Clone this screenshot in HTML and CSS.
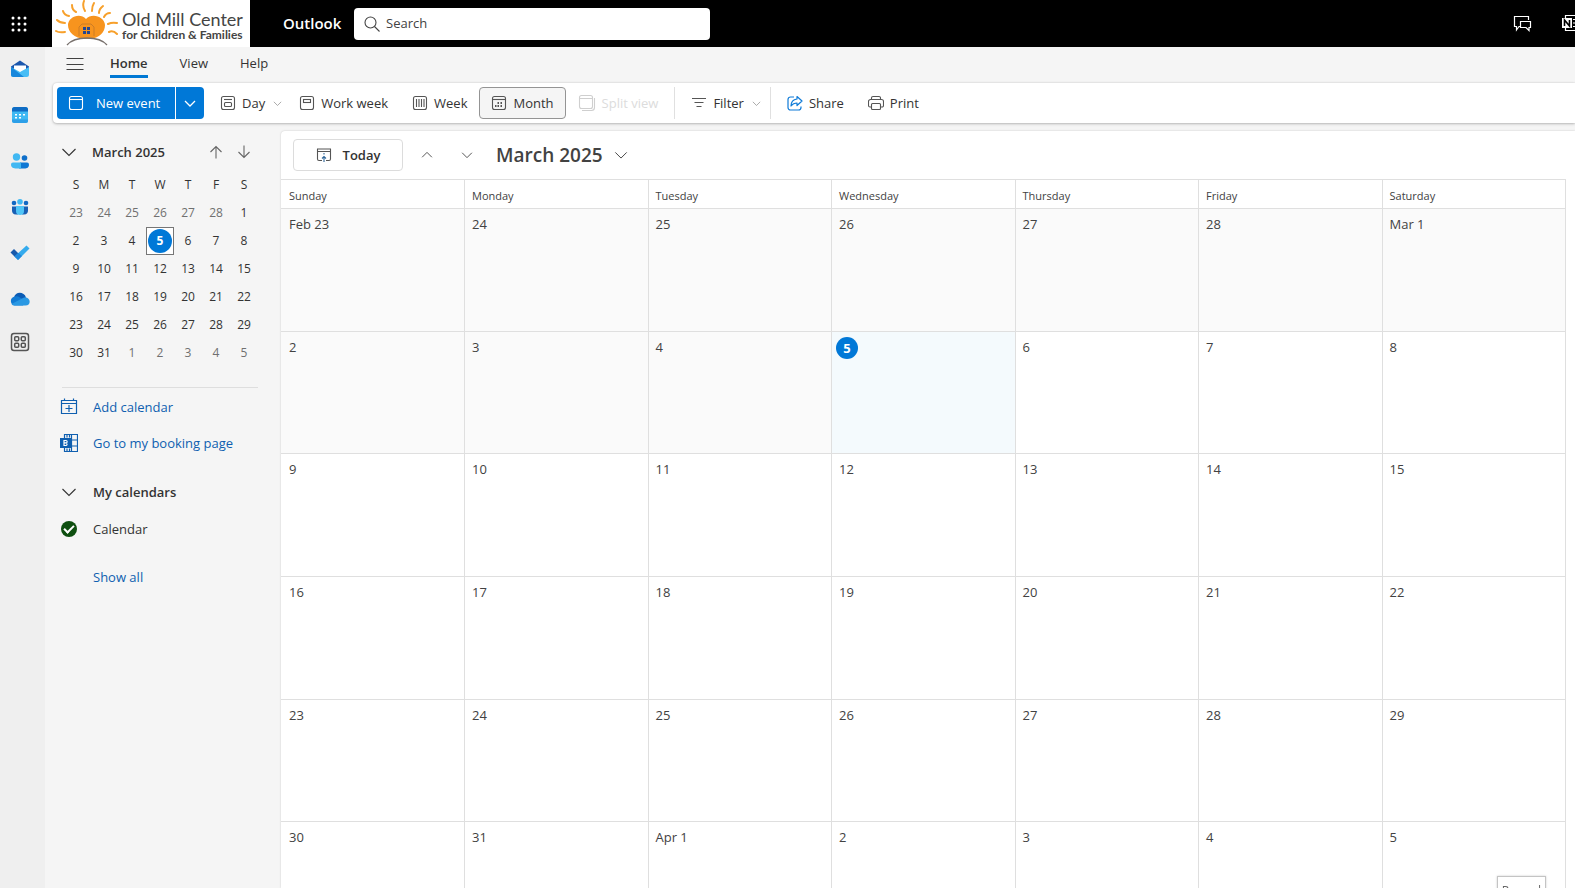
FILE: index.html
```html
<!DOCTYPE html>
<html lang="en">
<head>
    <meta charset="UTF-8">
    <title>Calendar - Outlook</title>
    <link rel="stylesheet" href="styles.css">
</head>
<body>
    <!-- shared icons -->
    <svg class="sprite" aria-hidden="true">
        <symbol id="chev-down" viewBox="0 0 16 16"><path d="M1.5 5 8 11.5 14.5 5" fill="none" stroke="currentColor" stroke-width="1.1"/></symbol>
        <symbol id="chev-up" viewBox="0 0 16 16"><path d="M1.5 11 8 4.5 14.5 11" fill="none" stroke="currentColor" stroke-width="1.1"/></symbol>
    </svg>

    <header class="topbar">
        <button class="launcher" aria-label="App launcher">
            <svg width="16" height="16" viewBox="0 0 16 16" fill="#fff"><circle cx="2" cy="2" r="1.5"/><circle cx="8" cy="2" r="1.5"/><circle cx="14" cy="2" r="1.5"/><circle cx="2" cy="8" r="1.5"/><circle cx="8" cy="8" r="1.5"/><circle cx="14" cy="8" r="1.5"/><circle cx="2" cy="14" r="1.5"/><circle cx="8" cy="14" r="1.5"/><circle cx="14" cy="14" r="1.5"/></svg>
        </button>
        <a class="brand" href="#">
            <svg width="64" height="47" viewBox="0 0 64 47" fill="none">
                <path d="M33 39C22 38 16 32 16 25c0-8 12-13 18-6 6-7 19-2 19 6 0 7-5 13-16 14z" fill="#f7941e"/>
                <g stroke="#f7a02b" stroke-width="2" stroke-linecap="round">
                    <path d="M4 31q3 2 9 1M5 20q3 3 8 3M11 11q1 4 6 5M20 5q0 5 4 7M32 1q-2 5 1 10M42 3q-2 3-2 8M51 6q-4 3-4 7M58 13q-4 0-6 4M65 23q-5-1-9 1M57 32q4-2 8 2"/>
                </g>
                <path d="M15 45q6-7 20-7t20 7" stroke="#77706c" stroke-width="1.3"/>
                <path d="M27 36v-9l3-3h9l3 3v9" stroke="#cc7c25"/>
                <path d="M31 27h3v3h-3zM35 27h3v3h-3zM31 31h3v3h-3zM35 31h3v3h-3z" fill="#24478f"/>
            </svg>
            <span class="brand-text">
                <span class="brand-name">Old Mill Center</span>
                <span class="brand-sub">for Children &amp; Families</span>
            </span>
        </a>
        <span class="app-name">Outlook</span>
        <label class="search">
            <svg width="16" height="16" viewBox="0 0 16 16" fill="none" stroke="#444" stroke-width="1.1"><circle cx="6.5" cy="6.5" r="5.5"/><path d="m10.500 10.500 5 5"/></svg>
            <input type="text" placeholder="Search" aria-label="Search">
        </label>
        <div class="top-actions">
            <button aria-label="Chat">
                <svg width="20" height="20" viewBox="0 0 20 20" fill="none" stroke="#fff" stroke-width="1.2"><path d="M7 12.500H6L3.500 16v-3.500h-2v-10h14V6"/><path d="M7.500 7.500h10v6h-1.500v3L13 13.500H7.500z"/></svg>
            </button>
            <button aria-label="OneNote feed">
                <svg width="20" height="20" viewBox="0 0 20 20"><path d="M3.500 4V1.500h15v15h-15V14M11 5.500h7M11 9h7M11 12.500h7" fill="none" stroke="#fff" stroke-width="1.200"/><path d="M0 4h10v10H0z" fill="#fff"/><path d="M2.500 12V6l5 6V6" fill="none" stroke="#000" stroke-width="1.600"/></svg>
            </button>
        </div>
    </header>

    <div class="shell">
        <nav class="rail" aria-label="Apps">
            <a href="#" aria-label="Mail"><svg width="20" height="20" viewBox="0 0 20 20"><path d="M1 7.500 10 1.500l9 6V11H1z" fill="#1b57ad"/><path d="M4 6.500h12v7H4z" fill="#fff"/><path d="M1 8l9 5 9-5v7.500a2.500 2.500 0 0 1-2.500 2.500h-13A2.500 2.500 0 0 1 1 15.500z" fill="#47bdf5"/><path d="M1 8l13 10H3.500A2.500 2.500 0 0 1 1 15.500z" fill="#1787dc"/></svg></a>
            <a href="#" aria-label="Calendar"><svg width="20" height="20" viewBox="0 0 20 20"><rect x="2" y="2" width="16" height="16" rx="2.500" fill="#3fb9f3"/><path d="M2 6.500v-2A2.500 2.500 0 0 1 4.500 2h11A2.500 2.500 0 0 1 18 4.500v2z" fill="#0f6cc4"/><path d="M2 14.500h16v1a2.500 2.500 0 0 1-2.500 2.500h-11A2.500 2.500 0 0 1 2 15.500z" fill="#2c9fe8"/><path d="M5 9h2v1.500H5zM9 9h2v1.500H9zM13 9h2v1.500h-2zM5 12h2v1.500H5zM9 12h2v1.500H9z" fill="#fff"/></svg></a>
            <a href="#" aria-label="People"><svg width="20" height="20" viewBox="0 0 20 20"><circle cx="6.500" cy="6" r="3.700" fill="#41b8f2"/><circle cx="14.500" cy="7" r="2.800" fill="#0f6fca"/><path d="M10 11.500h7a2 2 0 0 1 2 2c0 3-2 4-4.500 4H9z" fill="#0f78d4"/><path d="M3 11.500h8v6H6.500C3.500 17.500 1 16.500 1 13.500a2 2 0 0 1 2-2z" fill="#41b8f2"/></svg></a>
            <a href="#" aria-label="Groups"><svg width="20" height="20" viewBox="0 0 20 20"><circle cx="4" cy="6" r="2.300" fill="#1268c3"/><circle cx="16" cy="6" r="2.300" fill="#1268c3"/><path d="M2 9.500h6v8H6c-3 0-4-2-4-4zM12 9.500h6v4c0 2-1 4-4 4h-2z" fill="#185fb4"/><circle cx="10" cy="4.800" r="2.800" fill="#41b8f2"/><path d="M6 10a1 1 0 0 1 1-1h6a1 1 0 0 1 1 1v4a4 4 0 0 1-8 0z" fill="#50c5f7"/></svg></a>
            <a href="#" aria-label="To Do"><svg width="20" height="20" viewBox="0 0 20 20"><path d="m.5 9.500 3.500-3.500 5 5-3.500 3.500z" fill="#195aab"/><path d="m4.500 13.500 12-11 3 3L8 17z" fill="#35abed"/><path d="m4.500 13.500 4-3.500 3.500 3L8 17z" fill="#2088dc"/></svg></a>
            <a href="#" aria-label="OneDrive"><svg width="20" height="20" viewBox="0 0 20 20"><path d="M4 8.500C5 2.500 14 2 16 8.500l-4 4z" fill="#0b5cb5"/><path d="M4.500 16.500A4.500 4.500 0 0 1 4 7.800Q7 6.500 10 8.500l6 3.500-3 4.500z" fill="#127bd4"/><path d="M4.500 16.500Q2.500 16.500 1.500 15L13 9q2-1.200 4-.3c4 1.800 3.500 7.800-1.500 7.800z" fill="#2a98e3"/></svg></a>
            <a href="#" class="rail-more" aria-label="More apps"><svg width="20" height="20" viewBox="0 0 20 20" fill="none" stroke="#555" stroke-width="1.500"><rect x="1.500" y="1.500" width="17" height="17" rx="2.500"/><rect x="4.700" y="4.700" width="4" height="4" rx="1"/><rect x="11.300" y="4.700" width="4" height="4" rx="1"/><rect x="4.700" y="11.300" width="4" height="4" rx="1"/><rect x="11.300" y="11.300" width="4" height="4" rx="1"/></svg></a>
        </nav>

        <div class="content">
            <div class="tabs">
                <button class="menu-btn" aria-label="Menu"><svg width="18" height="14" viewBox="0 0 18 14" stroke="#424242" stroke-width="1.200"><path d="M.5 1.500h17M.5 7.500h17M.5 12.500h17"/></svg></button>
                <button class="tab active">Home</button>
                <button class="tab">View</button>
                <button class="tab">Help</button>
            </div>

            <div class="toolbar">
                <div class="new-event">
                    <button class="new-main">
                        <svg width="16" height="16" viewBox="0 0 16 16" fill="none" stroke="#fff" stroke-width="1.100"><rect x="1.500" y="1.500" width="13" height="13" rx="2"/><path d="M1.500 4.500h13"/></svg>
                        New event
                    </button>
                    <button class="new-more" aria-label="More new options"><svg width="12" height="12" viewBox="0 0 12 12"><path d="M1 4l5 5 5-5" fill="none" stroke="#fff" stroke-width="1.300"/></svg></button>
                </div>
                <button class="tool day">
                    <svg class="line" width="16" height="16" viewBox="0 0 16 16"><rect x="1.500" y="1.500" width="13" height="13" rx="2"/><path d="M4 4.500h8"/><rect x="4.500" y="7.500" width="7" height="4" rx="1"/></svg>
                    Day
                    <svg class="caret" width="9" height="9"><use href="#chev-down"/></svg>
                </button>
                <button class="tool work">
                    <svg class="line" width="16" height="16" viewBox="0 0 16 16"><rect x="1.500" y="1.500" width="13" height="13" rx="2"/><rect x="4.500" y="4.500" width="7" height="3"/></svg>
                    Work week
                </button>
                <button class="tool week">
                    <svg class="line" width="16" height="16" viewBox="0 0 16 16"><rect x="1.500" y="1.500" width="13" height="13" rx="2"/><path d="M4.500 4v8M7 4v8M9.500 4v8M12 4v8"/></svg>
                    Week
                </button>
                <button class="tool month selected">
                    <svg class="line" width="16" height="16" viewBox="0 0 16 16"><rect x="1.500" y="1.500" width="13" height="13" rx="2"/><path d="M1.500 4.500h13"/><path d="M6.500 8h1.500M9.500 8h1.500M4 11h1.500M6.500 11h1.500M9.500 11h1.500" stroke-width="1.800"/></svg>
                    Month
                </button>
                <button class="tool split" disabled>
                    <svg class="line" width="18" height="18" viewBox="0 0 18 18"><rect x="1.500" y="1.500" width="13" height="13" rx="2"/><path d="M1.500 4.500h13M4 16.500h9.500a3 3 0 0 0 3-3V4"/></svg>
                    Split view
                </button>
                <span class="divider"></span>
                <button class="tool filter">
                    <svg class="line" width="16" height="16" viewBox="0 0 16 16"><path d="M1 3.500h14M3.500 7.500h9M5.500 11.500h5"/></svg>
                    Filter
                    <svg class="caret" width="9" height="9"><use href="#chev-down"/></svg>
                </button>
                <span class="divider"></span>
                <button class="tool share">
                    <svg width="16" height="16" viewBox="0 0 16 16" fill="none" stroke="#0f7bd8" stroke-width="1.200"><path d="M7 2H3.500A2.500 2.500 0 0 0 1 4.500v8A2.500 2.500 0 0 0 3.500 15h8a2.500 2.500 0 0 0 2.500-2.500V11.500"/><path d="M10 1.500 15 6l-5 4.500V8C7.500 8 5.500 9 4 11c0-4 2.500-6.500 6-7z" stroke-linejoin="round"/></svg>
                    Share
                </button>
                <button class="tool print">
                    <svg class="line" width="16" height="16" viewBox="0 0 16 16"><path d="M3.500 12H2a1.500 1.500 0 0 1-1.500-1.500V6.500a2 2 0 0 1 2-2h11a2 2 0 0 1 2 2v4A1.500 1.500 0 0 1 14 12h-1.500M3.500 4.500V3A1.500 1.500 0 0 1 5 1.500h6A1.500 1.500 0 0 1 12.500 3v1.500"/><rect x="3.500" y="8.500" width="9" height="6" rx="1"/></svg>
                    Print
                </button>
            </div>

            <div class="workspace">
                <aside class="sidebar">
                    <div class="mini-head">
                        <button aria-label="Collapse"><svg width="16" height="16"><use href="#chev-down"/></svg></button>
                        <button class="mini-title">March 2025</button>
                        <button class="arrow" aria-label="Previous month"><svg width="14" height="14" viewBox="0 0 14 14"><path d="M7 13.500V2M1.500 7 7 1.500 12.500 7" fill="none" stroke="#666" stroke-width="1.100"/></svg></button>
                        <button class="arrow" aria-label="Next month"><svg width="14" height="14" viewBox="0 0 14 14"><path d="M7 .5V12M1.500 7 7 12.500 12.500 7" fill="none" stroke="#666" stroke-width="1.100"/></svg></button>
                    </div>
                    <table class="mini">
                        <thead>
                            <tr><th>S</th><th>M</th><th>T</th><th>W</th><th>T</th><th>F</th><th>S</th></tr>
                        </thead>
                        <tbody>
                            <tr><td class="dim">23</td><td class="dim">24</td><td class="dim">25</td><td class="dim">26</td><td class="dim">27</td><td class="dim">28</td><td>1</td></tr>
                            <tr><td>2</td><td>3</td><td>4</td><td class="today"><span>5</span></td><td>6</td><td>7</td><td>8</td></tr>
                            <tr><td>9</td><td>10</td><td>11</td><td>12</td><td>13</td><td>14</td><td>15</td></tr>
                            <tr><td>16</td><td>17</td><td>18</td><td>19</td><td>20</td><td>21</td><td>22</td></tr>
                            <tr><td>23</td><td>24</td><td>25</td><td>26</td><td>27</td><td>28</td><td>29</td></tr>
                            <tr><td>30</td><td>31</td><td class="dim">1</td><td class="dim">2</td><td class="dim">3</td><td class="dim">4</td><td class="dim">5</td></tr>
                        </tbody>
                    </table>
                    <div class="side-links">
                        <a href="#">
                            <svg width="18" height="18" viewBox="0 0 18 18" fill="none" stroke="#0f5fb0" stroke-width="1.200"><path d="M1.500 2.500h15v13h-15zM1.500 5.500h15M4.500 .5v2M13.500 .5v2M9 7v7M5.500 10.500h7"/></svg>
                            Add calendar
                        </a>
                        <a href="#">
                            <svg width="18" height="18" viewBox="0 0 18 18"><path d="M4.500 .5h13v17h-13zM11.500 .5v17M11.500 6h6M11.500 12h6M7 .5v3M9.500 .5v3M7 14.500v3M9.500 14.500v3" fill="none" stroke="#0f5fb0" stroke-width="1.200"/><path d="M0 4h11v10H0z" fill="#0f5fb0"/><path d="M4 6.500v5h2a1.400 1.400 0 0 0 0-2.700H4h2a1.100 1.100 0 0 0 0-2.300z" fill="none" stroke="#fff" stroke-width="1.200"/></svg>
                            Go to my booking page
                        </a>
                    </div>
                    <button class="side-row group">
                        <svg width="16" height="16"><use href="#chev-down"/></svg>
                        My calendars
                    </button>
                    <label class="side-row">
                        <input type="checkbox" checked>
                        Calendar
                    </label>
                    <a class="show-all" href="#">Show all</a>
                </aside>

                <main class="calendar">
                    <div class="cal-head">
                        <button class="today-btn">
                            <svg width="16" height="16" viewBox="0 0 16 16" fill="none" stroke="#555" stroke-width="1.100"><path d="M6 13.500H3A1.500 1.500 0 0 1 1.500 12V2h13v10a1.500 1.500 0 0 1-1.500 1.500h-3M1.500 4.500h13"/><path d="M8 6v1.500M8 15V9.500M6 11.500l2-2 2 2" stroke="#2f6699"/></svg>
                            Today
                        </button>
                        <button class="step" aria-label="Previous"><svg width="12" height="12"><use href="#chev-up"/></svg></button>
                        <button class="step" aria-label="Next"><svg width="12" height="12"><use href="#chev-down"/></svg></button>
                        <button class="cal-title">March 2025 <svg width="14" height="14"><use href="#chev-down"/></svg></button>
                    </div>
                    <table class="month-grid">
                        <thead>
                            <tr><th>Sunday</th><th>Monday</th><th>Tuesday</th><th>Wednesday</th><th>Thursday</th><th>Friday</th><th>Saturday</th></tr>
                        </thead>
                        <tbody>
                            <tr><td class="past">Feb 23</td><td class="past">24</td><td class="past">25</td><td class="past">26</td><td class="past">27</td><td class="past">28</td><td class="past">Mar 1</td></tr>
                            <tr><td class="past">2</td><td class="past">3</td><td class="past">4</td><td class="now"><span>5</span></td><td>6</td><td>7</td><td>8</td></tr>
                            <tr><td>9</td><td>10</td><td>11</td><td>12</td><td>13</td><td>14</td><td>15</td></tr>
                            <tr><td>16</td><td>17</td><td>18</td><td>19</td><td>20</td><td>21</td><td>22</td></tr>
                            <tr><td>23</td><td>24</td><td>25</td><td>26</td><td>27</td><td>28</td><td>29</td></tr>
                            <tr><td>30</td><td>31</td><td>Apr 1</td><td>2</td><td>3</td><td>4</td><td>5</td></tr>
                        </tbody>
                    </table>
                </main>
            </div>
        </div>
    </div>
    <div class="tooltip" role="tooltip">Record</div>
</body>
</html>
```
FILE: styles.css
```css
* {
    box-sizing: border-box;
}
body {
    margin: 0;
    height: 100vh;
    overflow: hidden;
    display: flex;
    flex-direction: column;
    background: #f5f5f5;
    color: #333;
    font-family: "Open Sans", "Noto Sans", sans-serif;
    font-size: 13px;
    line-height: 20px;
}
button {
    font: inherit;
    color: inherit;
    background: none;
    border: none;
    padding: 0;
    cursor: pointer;
    white-space: nowrap;
    display: flex;
    align-items: center;
}
a {
    color: #0f5fb0;
    text-decoration: none;
}
svg {
    display: block;
    flex: none;
}
table {
    border-collapse: collapse;
    table-layout: fixed;
}
.sprite {
    position: absolute;
    width: 0;
    height: 0;
}

/* top bar */
.topbar {
    flex: none;
    height: 47px;
    background: #000;
    display: flex;
    align-items: center;
    overflow: hidden;
}
.launcher {
    width: 52px;
    padding-left: 11px;
}
.brand {
    width: 198px;
    height: 47px;
    background: #fff;
    display: flex;
    align-items: center;
    gap: 6px;
    color: #444;
    font-family: Lato, sans-serif;
    white-space: nowrap;
}
.brand svg {
    overflow: visible;
}
.brand-text {
    display: flex;
    flex-direction: column;
    padding-top: 4px;
}
.brand-name {
    font-size: 18px;
    line-height: 18px;
}
.brand-sub {
    font-size: 12px;
    line-height: 13px;
    font-weight: bold;
}
.app-name {
    margin-left: 33px;
    padding-bottom: 2px;
    width: 71px;
    color: #fff;
    font-size: 15px;
    font-weight: 600;
}
.search {
    width: 356px;
    height: 32px;
    padding: 0 10px;
    display: flex;
    align-items: center;
    gap: 6px;
    background: #fff;
    border-radius: 4px;
}
.search input {
    flex: 1;
    min-width: 0;
    border: none;
    outline: none;
    padding: 0 0 2px;
    font: inherit;
}
.search input::placeholder {
    color: #424242;
    opacity: 1;
}
.top-actions {
    display: flex;
    gap: 29px;
    margin-left: auto;
    margin-right: -7px;
}

.shell {
    flex: 1;
    min-height: 0;
    display: flex;
}
.rail {
    flex: none;
    width: 45px;
    padding: 12px 0 0 10px;
    background: #efefef;
    display: flex;
    flex-direction: column;
    gap: 26px;
}
.rail-more {
    margin-top: -3px;
}
.content {
    flex: 1;
    min-width: 0;
    display: flex;
    flex-direction: column;
}

/* ribbon */
.tabs {
    flex: none;
    height: 36px;
    padding-left: 21px;
    display: flex;
    gap: 32px;
}
.menu-btn {
    margin-right: -6px;
    padding-bottom: 2px;
}
.tab {
    height: 31px;
    padding-top: 4px;
    border-bottom: 3px solid transparent;
}
.tab.active {
    font-weight: 600;
    border-bottom-color: #0078d4;
}
.toolbar {
    flex: none;
    height: 40px;
    margin-left: 8px;
    padding: 0 4px;
    display: flex;
    align-items: center;
    background: #fff;
    border-radius: 4px 0 0 4px;
    box-shadow: 0 0 2px rgba(0,0,0,0.15), 0 1px 3px rgba(0,0,0,0.22);
}
.new-event {
    display: flex;
    gap: 1px;
    height: 32px;
    margin-right: 4px;
    color: #fff;
}
.new-event button {
    background: #0078d7;
}
.new-event .new-main {
    width: 118px;
    padding-left: 11px;
    gap: 12px;
    border-radius: 4px 0 0 4px;
}
.new-event .new-more {
    width: 28px;
    justify-content: center;
    border-radius: 0 4px 4px 0;
}
.tool {
    height: 32px;
    padding: 0 11px;
    gap: 6px;
    border: 1px solid transparent;
    border-radius: 4px;
}
.day,
.filter {
    padding-right: 4px;
}
.selected {
    background: #f5f5f5;
    border-color: #949494;
}
.tool:disabled {
    color: #dcdcdc;
}
.line {
    fill: none;
    stroke: #555;
    stroke-width: 1.1;
}
.tool:disabled .line {
    stroke: #cfcfcf;
}
.caret {
    margin-left: 2px;
    color: #777;
}
.divider {
    width: 1px;
    height: 32px;
    margin: 0 4px;
    background: #e0e0e0;
}

.workspace {
    flex: 1;
    min-height: 0;
    display: flex;
}

/* sidebar */
.sidebar {
    flex: none;
    width: 236px;
    padding: 16px 23px 0 16px;
}
.mini-head {
    height: 26px;
    display: flex;
    align-items: center;
}
.mini-title {
    flex: 1;
    margin-left: 15px;
    font-weight: 600;
}
.arrow {
    width: 28px;
    justify-content: center;
}
.mini {
    width: 196px;
    margin: 6px 0 0 1px;
    font-size: 12px;
}
.mini th,
.mini td {
    width: 28px;
    height: 28px;
    padding: 0;
    text-align: center;
    line-height: 24px;
}
.mini th {
    font-weight: normal;
}
.mini .dim {
    color: #707070;
}
.mini .today {
    outline: 1px solid #767676;
    outline-offset: -1px;
    background: #fff;
}
.today span,
.now span {
    display: block;
    border-radius: 50%;
    background: #0078d7;
    color: #fff;
    font-weight: bold;
    text-align: center;
}
.today span {
    width: 24px;
    margin: 0 auto;
}
.side-links {
    margin: 20px 0 0 1px;
    border-top: 1px solid #dedede;
}
.side-links a,
.side-row {
    width: 100%;
    height: 36px;
    display: flex;
    align-items: center;
    gap: 14px;
}
.side-links a {
    margin-left: -2px;
    gap: 15px;
}
.side-links a:first-child {
    margin-top: 1px;
}
.group {
    margin: 13px 0 1px;
    gap: 16px;
    font-weight: 600;
}
.side-row input {
    appearance: none;
    width: 16px;
    height: 16px;
    margin: 0 2px 0 0;
    border-radius: 50%;
    background: #0e4f10;
    display: flex;
    align-items: center;
    justify-content: center;
}
.side-row input::after {
    content: "";
    width: 8px;
    height: 4px;
    border-left: 2px solid #fff;
    border-bottom: 2px solid #fff;
    transform: translateY(-1px) rotate(-45deg);
}
.show-all {
    display: block;
    margin: 20px 0 0 32px;
}

/* month view */
.calendar {
    flex: 1;
    min-width: 0;
    margin-top: 8px;
    padding-right: 9px;
    background: #fff;
    border-radius: 4px 0 0 0;
    box-shadow: 0 0 2px rgba(0,0,0,0.2);
    overflow: hidden;
}
.cal-head {
    height: 48px;
    padding-left: 12px;
    display: flex;
    align-items: center;
}
.today-btn {
    width: 110px;
    height: 32px;
    margin-right: 4px;
    justify-content: center;
    gap: 11px;
    border: 1px solid #dcdcdc;
    border-radius: 4px;
    font-weight: 600;
}
.step {
    width: 40px;
    height: 32px;
    justify-content: center;
}
.cal-title {
    margin-left: 9px;
    gap: 11px;
    font-size: 19px;
    font-weight: 600;
    color: #424242;
}
.month-grid {
    width: 100%;
    height: 766px;
    color: #424242;
}
.month-grid th,
.month-grid td {
    border: 1px solid #dfdfdf;
    padding: 0 7px;
    text-align: left;
}
.month-grid th:first-child,
.month-grid td:first-child {
    border-left: none;
    padding-left: 8px;
}
.month-grid th {
    height: 29px;
    padding-top: 4px;
    font-size: 11px;
    font-weight: normal;
}
.month-grid td {
    height: 122px;
    padding-top: 5px;
    vertical-align: top;
}
.month-grid .past {
    background: #fafafa;
}
.month-grid .now {
    padding-left: 4px;
    background: #f4fafd;
}
.now span {
    width: 22px;
    line-height: 22px;
}

.tooltip {
    position: fixed;
    right: 29px;
    bottom: -18px;
    width: 49px;
    height: 30px;
    border: 1px solid #c4c4c4;
    background: #fff;
    box-shadow: 0 0 2px rgba(0,0,0,0.2);
    color: #666;
    font-size: 12px;
    line-height: 28px;
    text-align: center;
}
```
